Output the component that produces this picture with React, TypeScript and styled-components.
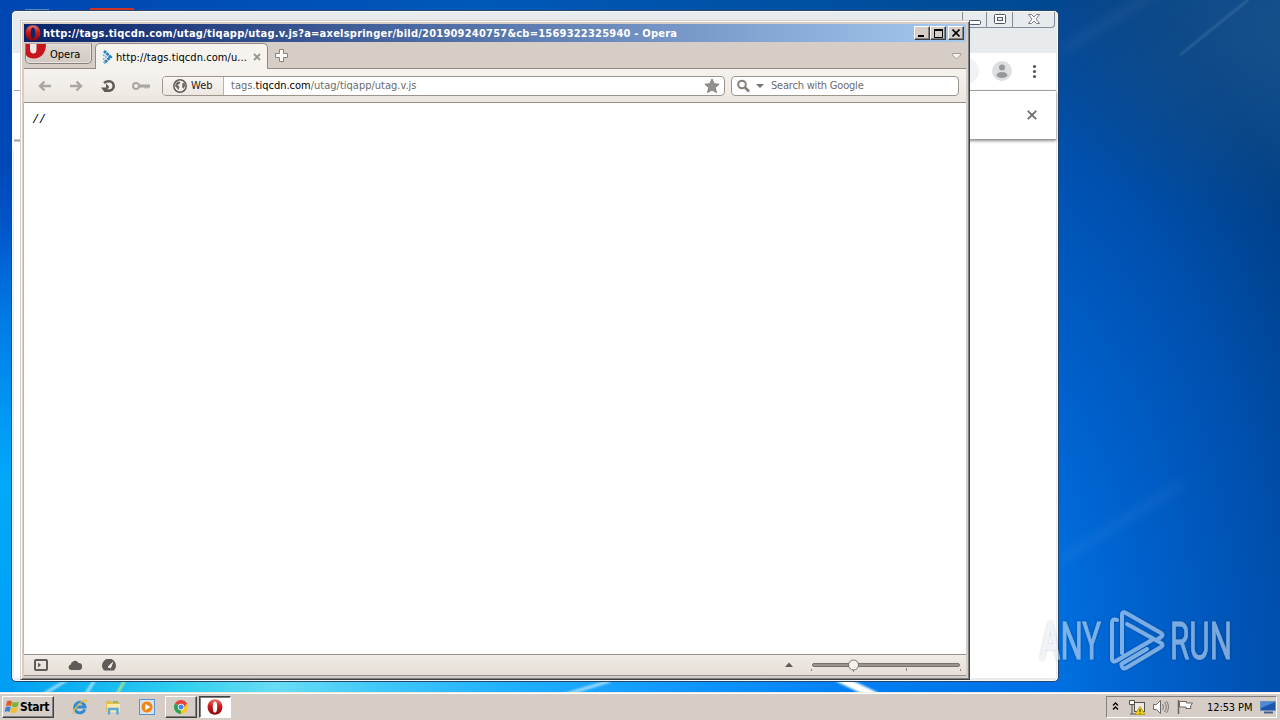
import styled, { createGlobalStyle, css } from "styled-components";

const GlobalStyle = createGlobalStyle`
  * {
    box-sizing: border-box;
  }
  body {
    margin: 0;
    overflow: hidden;
    font-family: "DejaVu Sans Condensed", "DejaVu Sans", sans-serif;
    font-size: 11px;
    color: #000;
  }
  svg {
    display: block;
    flex: none;
  }
`;

const Screen = styled.div`
  position: relative;
  display: flex;
  flex-direction: column;
  width: 1280px;
  height: 720px;
  overflow: hidden;
`;

const Desktop = styled.div`
  position: relative;
  flex: 1;
  background:
    linear-gradient(#0046b2, #0048b8 24%, #0054c8 32%, #0078e4 45%, #0098f4 60%, #00aaf8 70%, #009df4 100%) 0 0 / 14px
      100% no-repeat,
    linear-gradient(90deg, #0046b2, #0058b8 45%, #004f9f 80%, #004890) 0 0 / 1060px 14px no-repeat,
    linear-gradient(
        90deg,
        #009df4,
        #12b4f2 8%,
        #30d0f0 17%,
        #68dcf4 26%,
        #40c8fa 36%,
        #20b0fc 48%,
        #1098fc 64%,
        #0080f4 80%,
        #006ee6
      )
      0 100% / 1060px 14px no-repeat,
    radial-gradient(ellipse 300px 190px at 1290px 30px, #16508a, transparent),
    radial-gradient(
      ellipse 560px 900px at 900px 690px,
      #0080f0 0,
      #0070e0 28%,
      #005ec8 48%,
      #004fac 68%,
      #003f86 88%,
      #04458c 100%
    );
`;

const Wallpaper = styled.svg`
  position: absolute;
  inset: 0;
`;

/* ---------- browser window in the back ---------- */

const BackWindow = styled.div`
  position: absolute;
  left: 11px;
  top: 10px;
  width: 1048px;
  height: 672px;
  display: flex;
  flex-direction: column;
  padding: 1px 2px 3px 2px;
  border: 1px solid #26456c;
  border-radius: 5px;
  background: #e7ebee;
  box-shadow: inset 0 0 0 1px #f8fafa;
  isolation: isolate;
`;

const BackCaption = styled.div`
  display: flex;
  justify-content: flex-end;
  height: 41px;
`;

const AeroButtons = styled.div`
  display: flex;
  height: 16px;
  margin-right: 1px;
  border: 1px solid #838b98;
  border-top: 0;
  border-radius: 0 0 4px 4px;
`;

const AeroButton = styled.div<{ $width: number }>`
  display: flex;
  align-items: center;
  justify-content: center;
  width: ${(p) => p.$width}px;
  & + & {
    border-left: 1px solid #838b98;
  }
`;

const BackToolbar = styled.div`
  display: flex;
  align-items: center;
  justify-content: flex-end;
  height: 38px;
  padding: 0 18px 2px 0;
  background: #fff;
  border-bottom: 1px solid #a9abac;
`;

const OmniboxEnd = styled.div`
  width: 30px;
  height: 26px;
  margin-right: 13px;
  border-radius: 13px;
  background: #f1f2f3;
`;

const BackInfobar = styled.div`
  display: flex;
  align-items: center;
  justify-content: flex-end;
  height: 49px;
  padding-right: 19px;
  background: #fff;
  border-bottom: 1px solid #999;
  box-shadow: 0 1px 3px rgba(0, 0, 0, 0.45);
  z-index: 1;
`;

const BackPage = styled.div`
  flex: 1;
  background: #fff;
`;

/* ---------- Opera window ---------- */

const OperaWindow = styled.div`
  position: absolute;
  left: 20px;
  top: 20px;
  width: 950px;
  height: 660px;
  display: flex;
  flex-direction: column;
  padding: 2px;
  border: 1px solid;
  border-color: #d6d0c8 #404040 #404040 #d6d0c8;
  background: #d6cec6;
  box-shadow:
    inset 1px 1px 0 #fff,
    inset -1px -1px 0 #808080;
`;

const TitleBar = styled.div`
  display: flex;
  align-items: center;
  height: 18px;
  margin: 1px 1px 0 1px;
  padding: 0 2px 0 1px;
  background: linear-gradient(90deg, #0a246a, #a6caf0);
  color: #fff;
`;

const TitleText = styled.span`
  flex: 1;
  margin: 0 0 0 2px;
  font-weight: 700;
  font-size: 11px;
  letter-spacing: 0.228px;
  white-space: nowrap;
`;

const CaptionButton = styled.div<{ $gap?: boolean }>`
  display: flex;
  align-items: center;
  justify-content: center;
  width: 16px;
  height: 14px;
  margin-left: ${(p) => (p.$gap ? 2 : 0)}px;
  background: #d6cec6;
  border: 1px solid;
  border-color: #fff #404040 #404040 #fff;
  box-shadow: inset -1px -1px 0 #808080;
`;

const TabBar = styled.div`
  display: flex;
  height: 27px;
  margin: 0 1px;
  padding-left: 1px;
  background: #d6cec6;
  border-bottom: 1px solid #8f8a84;
`;

const OperaMenu = styled.div`
  display: flex;
  width: 67px;
  height: 21px;
  margin-top: 1px;
  border: 1px solid #86817c;
  border-top-color: #b4aea8;
  border-radius: 1px 1px 5px 5px;
  background: linear-gradient(#ded8d2, #d2cac2);
  box-shadow: inset 0 0 0 1px #e9e4df;
  line-height: 21px;
  overflow: hidden;
`;

const OperaMenuLabel = styled.span`
  margin-left: 3px;
`;

const Tab = styled.div`
  display: flex;
  align-items: center;
  width: 173px;
  height: 26px;
  margin: 1px 0 -1px 3px;
  padding: 1px 6px 0 6px;
  border: 1px solid #8f8a84;
  border-bottom: 0;
  border-radius: 5px 5px 0 0;
  background: #f6f3ef;
`;

const TabText = styled.span`
  flex: 1;
  margin-left: 3px;
  letter-spacing: 0.07px;
  white-space: nowrap;
`;

const NewTab = styled.div`
  display: flex;
  flex: 1;
  padding: 7px 0 0 7px;
`;

const TabListArrow = styled.div`
  padding: 11px 5px 0 0;
`;

const AddressBar = styled.div`
  display: flex;
  align-items: center;
  height: 34px;
  margin: 0 1px;
  padding: 0 7px 0 13px;
  background: linear-gradient(#f6f3ef, #ece7e0);
  border-bottom: 1px solid #969089;
`;

const NavIcons = styled.div`
  display: flex;
  align-items: center;
  width: 125px;
  gap: 15px;
`;

const Field = styled.div<{ $width: number; $gap?: number }>`
  display: flex;
  align-items: center;
  width: ${(p) => p.$width}px;
  height: 20px;
  margin-left: ${(p) => p.$gap ?? 0}px;
  border: 1px solid #9b958e;
  border-radius: 4px;
  background: #fff;
  color: #6c6c6c;
  overflow: hidden;
`;

const WebBadge = styled.div`
  display: flex;
  align-items: center;
  gap: 4px;
  width: 61px;
  height: 100%;
  padding-left: 10px;
  border-right: 1px solid #b9b3ac;
  background: linear-gradient(#f8f5f2, #ece7e1);
  color: #222;
`;

const Url = styled.span`
  flex: 1;
  padding-left: 7px;
  white-space: nowrap;
  b {
    font-weight: 400;
    color: #000;
  }
`;

const SearchHint = styled.span`
  margin-left: 7px;
  letter-spacing: -0.2px;
`;

const Page = styled.div`
  flex: 1;
  margin-right: 1px;
  padding: 10px 8px;
  border-left: 1px solid #bdb7b0;
  background: #fff;
  font: 12px/14px "Liberation Mono", monospace;
  letter-spacing: -0.4px;
`;

const StatusBar = styled.div`
  display: flex;
  align-items: center;
  height: 22px;
  margin: 0 1px 1px 1px;
  padding: 0 5px 0 10px;
  border-top: 1px solid #969089;
  border-bottom: 1px solid #87938b;
  background: linear-gradient(#f1ece7, #e6ded6);
`;

const StatusIcons = styled.div`
  display: flex;
  align-items: center;
  flex: 1;
  gap: 20px;
`;

/* ---------- taskbar ---------- */

const Taskbar = styled.div`
  position: relative;
  display: flex;
  align-items: center;
  height: 28px;
  padding: 1px 3px 0 2px;
  background: #d6cec6;
  border-top: 1px solid #f1ebe5;
  box-shadow: inset 0 1px 0 #fff;
`;

const raised = css`
  border: 1px solid;
  border-color: #fff #404040 #404040 #fff;
  box-shadow: inset -1px -1px 0 #808080;
`;

const sunken = css`
  border: 1px solid;
  border-color: #404040 #fff #fff #404040;
  box-shadow: inset 1px 1px 0 #808080;
`;

const StartButton = styled.div`
  ${raised}
  display: flex;
  align-items: center;
  width: 52px;
  height: 22px;
  padding-left: 1px;
  font-weight: 700;
  font-size: 12px;
  letter-spacing: -0.3px;
`;

const QuickLaunch = styled.div`
  display: flex;
  align-items: center;
  gap: 18px;
  margin: 0 10px 0 17px;
`;

const TaskButton = styled.div<{ $active?: boolean }>`
  ${(p) => (p.$active ? sunken : raised)}
  display: flex;
  align-items: center;
  justify-content: center;
  width: 32px;
  height: 22px;
  margin-right: 2px;
  background: ${(p) => (p.$active ? "#fff" : "#d6cec6")};
`;

const Tray = styled.div`
  display: flex;
  align-items: center;
  width: 171px;
  height: 22px;
  margin-left: auto;
  padding-left: 5px;
  border: 1px solid;
  border-color: #808080 #fff #fff #808080;
`;

const Clock = styled.span`
  margin: 0 8px 0 13px;
  letter-spacing: -0.1px;
  white-space: nowrap;
`;

const Watermark = styled.svg`
  position: absolute;
  left: 1030px;
  top: 604px;
  overflow: visible;
`;

const OperaLogo = () => (
  <svg width="16" height="16" viewBox="0 0 16 16">
    <defs>
      <linearGradient id="operaRed" x1="0" y1="0" x2="0" y2="1">
        <stop offset="0" stopColor="#e8746c" />
        <stop offset=".45" stopColor="#cc1a1c" />
        <stop offset="1" stopColor="#8c0508" />
      </linearGradient>
    </defs>
    <path
      fillRule="evenodd"
      fill="url(#operaRed)"
      d="M8 .3C12.4.3 15.4 3.6 15.4 8S12.4 15.7 8 15.7.6 12.4.6 8 3.6.3 8 .3ZM8 2.4C6.3 2.4 5.8 5 5.8 8S6.3 13.6 8 13.6 10.2 11 10.2 8 9.7 2.4 8 2.4Z"
    />
  </svg>
);

const ChromeLogo = () => (
  <svg width="14" height="14" viewBox="0 0 14 14">
    <path fill="#e2443b" d="M7 7 .94 3.5A7 7 0 0 1 13.06 3.5Z" />
    <path fill="#fbc921" d="M7 7 13.06 3.5A7 7 0 0 1 7 14Z" />
    <path fill="#2da14d" d="M7 7V14A7 7 0 0 1 .94 3.5Z" />
    <path fill="#e2443b" d="M7 3.5h6.06L10 7Z" />
    <path fill="#fbc921" d="M10.2 6 7 14 6.5 9Z" />
    <circle cx="7" cy="7" r="3.2" fill="#fff" />
    <circle cx="7" cy="7" r="2.5" fill="#4285f4" />
  </svg>
);

const WindowsFlag = () => (
  <svg width="16" height="16" viewBox="0 0 16 16">
    <path fill="#e2592a" d="M3 2.5C5 1 6.6 1.5 8 2.4L6.9 7.3C5.4 6.4 3.8 6.3 1.9 7.4Z" />
    <path fill="#79b635" d="M8.7 2.7C10.4 3.6 12.3 3.8 14.8 2.5L13.7 7.5C11.6 8.6 9.4 8.5 7.6 7.6Z" />
    <path fill="#3c82d2" d="M1.7 8.2C3.6 7.2 5.2 7.3 6.7 8.1L5.6 13C4.1 12.1 2.4 12.1.5 13.2Z" />
    <path fill="#f5bd2b" d="M7.4 8.4C9.2 9.3 11.2 9.4 13.5 8.3L12.4 13.2C10.3 14.3 8 14.2 6.3 13.3Z" />
  </svg>
);

const IeLogo = () => (
  <svg width="16" height="16" viewBox="-1 0 16 16">
    <path d="M12.7 10.5A5.2 5.2 0 1 1 13 7.9H4" fill="none" stroke="#2d8ad8" strokeWidth="3" />
    <path d="M1.6 14.8C.2 13 5 6 9.5 3 13 .7 16 .2 14.6 3.4" fill="none" stroke="#efbd2c" strokeWidth="1.3" />
  </svg>
);

const FolderIcon = () => (
  <svg width="16" height="16" viewBox="0 0 16 16">
    <path fill="#e4bd52" d="M1 2h5l1 1.5h8V13H1Z" />
    <path fill="#f8e9a6" d="M2 5h13v8H2Z" />
    <path fill="#90b958" d="M8 2h5v2H8Z" />
    <path d="M4 15.5V10h8.5v5.5" fill="none" stroke="#5aa9dc" strokeWidth="2.5" />
  </svg>
);

const MediaIcon = () => (
  <svg width="16" height="16" viewBox="0 0 16 16">
    <rect x=".5" y=".5" width="15" height="15" fill="#cfe2f4" stroke="#5b93cc" />
    <circle cx="8" cy="8" r="6" fill="#ef861d" stroke="#fff" strokeWidth=".6" />
    <path fill="#fff" d="M6.3 4.7 11.3 8l-5 3.3Z" />
  </svg>
);

const Arrow = ({ flip }: { flip?: boolean }) => (
  <svg width="16" height="16" viewBox="0 0 16 16" transform={flip ? "scale(-1 1)" : undefined}>
    <path d="M14 8H3M7.5 3.5 3 8l4.5 4.5" fill="none" stroke="#aaa6a2" strokeWidth="2.4" />
  </svg>
);

const BackWindowView = () => (
  <BackWindow>
    <BackCaption>
      <AeroButtons>
        <AeroButton $width={23}>
          <svg width="14" height="12">
            <rect x="1.5" y="6.5" width="11" height="4" rx="1" fill="#fff" stroke="#50566a" />
          </svg>
        </AeroButton>
        <AeroButton $width={26}>
          <svg width="12" height="11">
            <rect x=".5" y=".5" width="11" height="9" rx="1" fill="#fff" stroke="#50566a" />
            <rect x="3.5" y="3.5" width="5" height="3" fill="#e7ebee" stroke="#50566a" />
          </svg>
        </AeroButton>
        <AeroButton $width={42}>
          <svg width="12" height="11" viewBox="0 0 12 11">
            <path
              d="M.5.5h3L6 3 8.5.5h3L8 5l3.5 4.5h-3L6 7 3.5 9.5h-3L4 5Z"
              fill="#fff"
              stroke="#6b7080"
              strokeWidth=".9"
            />
          </svg>
        </AeroButton>
      </AeroButtons>
    </BackCaption>
    <BackToolbar>
      <OmniboxEnd />
      <svg width="20" height="20">
        <circle cx="10" cy="10" r="10" fill="#dedfe0" />
        <circle cx="10" cy="6.5" r="3" fill="#969899" />
        <ellipse cx="10" cy="14" rx="5.5" ry="3" fill="#969899" />
      </svg>
      <svg width="26" height="20">
        {[5, 10, 15].map((y) => (
          <circle key={y} cx="22.5" cy={y + 0.5} r="1.6" fill="#55585c" />
        ))}
      </svg>
    </BackToolbar>
    <BackInfobar>
      <svg width="10" height="10">
        <path d="M.8.8 9.2 9.2M9.2.8.8 9.2" stroke="#6a6d70" strokeWidth="1.8" />
      </svg>
    </BackInfobar>
    <BackPage />
  </BackWindow>
);

const OperaWindowView = () => (
  <OperaWindow>
    <TitleBar>
      <OperaLogo />
      <TitleText>http://tags.tiqcdn.com/utag/tiqapp/utag.v.js?a=axelspringer/bild/201909240757&amp;cb=1569322325940 - Opera</TitleText>
      <CaptionButton>
        <svg width="8" height="8">
          <path d="M0 6h6v2H0Z" />
        </svg>
      </CaptionButton>
      <CaptionButton>
        <svg width="9" height="9">
          <path d="M.5 1h8v7.5h-8Z" fill="none" stroke="#000" />
          <path d="M0 0h9v2H0Z" />
        </svg>
      </CaptionButton>
      <CaptionButton $gap>
        <svg width="8" height="8">
          <path d="M.5.5l7 7M7.5.5l-7 7" stroke="#000" strokeWidth="1.6" />
        </svg>
      </CaptionButton>
    </TitleBar>
    <TabBar>
      <OperaMenu>
        <svg width="21" height="17" viewBox="0 0 21 17">
          <path fill="#c5161d" d="M0 0H20C20 8 16 14.5 8 14.5 4 14.5 1 13 0 11Z" />
          <path fill="#f0e8e4" d="M4 0h6.5V5C10.500 8 9.500 9.500 7.500 9.500S4 8 4 5Z" />
        </svg>
        <OperaMenuLabel>Opera</OperaMenuLabel>
      </OperaMenu>
      <Tab>
        <svg width="11" height="14" viewBox="0 0 11 14">
          <path d="M2 1 8.5 7 2 13" fill="none" stroke="#2384c6" strokeWidth="2.8" strokeDasharray="2.8 .6" />
          <path d="M1 4.5 4 7 1 9.5" fill="none" stroke="#63b2e0" strokeWidth="1.6" strokeDasharray="2 1" />
        </svg>
        <TabText>http://tags.tiqcdn.com/u...</TabText>
        <svg width="8" height="8">
          <path d="M1 1l6 6M7 1 1 7" stroke="#98938f" strokeWidth="1.8" />
        </svg>
      </Tab>
      <NewTab>
        <svg width="13" height="13">
          <path d="M4.5.5h4v4h4v4h-4v4h-4v-4h-4v-4h4Z" fill="#fbfaf8" stroke="#89847e" />
        </svg>
      </NewTab>
      <TabListArrow>
        <svg width="9" height="7">
          <path d="M.5.5h8V2L4.5 6 .5 2Z" fill="#f5f2ee" stroke="#a39d97" />
        </svg>
      </TabListArrow>
    </TabBar>
    <AddressBar>
      <NavIcons>
        <Arrow />
        <Arrow flip />
        <svg width="18" height="16" viewBox="-2 0 18 16">
          <path d="M3 5Q5 3.200 8 3.200A4.600 4.600 0 0 1 8 12.600H3.500" fill="none" stroke="#5f5b58" strokeWidth="2.600" />
          <path d="M0 9.500H5V5.500L8 8.500V9.500L3.500 14Z" fill="#5f5b58" />
        </svg>
        <svg width="18" height="10" viewBox="0 0 18 10">
          <circle cx="4" cy="5" r="3" fill="none" stroke="#aaa6a2" strokeWidth="2" />
          <path d="M7 3.500h11v3h-1.500v1H15v-1h-1v1h-1.500v-1H7Z" fill="#aaa6a2" />
        </svg>
      </NavIcons>
      <Field $width={563}>
        <WebBadge>
          <svg width="14" height="14" viewBox="0 0 14 14">
            <circle cx="7" cy="7" r="6.2" fill="#f3efeb" stroke="#5f5b58" strokeWidth="1.5" />
            <path fill="#6f6b68" d="M3 4 5 2.500l2.500.5-1 2-2 .8L6.500 8 5.500 11 3.500 8.500 2 7ZM9.500 4l2-.2.700 3-1.700 3L9 8Z" />
          </svg>
          Web
        </WebBadge>
        <Url>
          tags.<b>tiqcdn.com</b>/utag/tiqapp/utag.v.js
        </Url>
        <svg width="24" height="16" viewBox="0 0 24 16">
          <path
            d="m12 1 2.1 4.7 5 .5-3.8 3.4 1.1 5L12 12l-4.4 2.6 1.1-5L4.9 6.2l5-.5Z"
            fill="#94908d"
            stroke="#858280"
          />
        </svg>
      </Field>
      <Field $width={228} $gap={6}>
        <svg width="32" height="14" viewBox="0 0 32 14">
          <circle cx="10" cy="5.5" r="3.8" fill="none" stroke="#85817e" strokeWidth="2" />
          <path d="m13 8.5 4 4" stroke="#85817e" strokeWidth="2.6" />
          <path d="M24 5h8l-4 4Z" fill="#77736f" />
        </svg>
        <SearchHint>Search with Google</SearchHint>
      </Field>
    </AddressBar>
    <Page>//</Page>
    <StatusBar>
      <StatusIcons>
        <svg width="14" height="12">
          <rect x="1" y="1" width="12" height="10" rx="1" fill="none" stroke="#5f5b58" strokeWidth="2" />
          <path d="M4 3.5 7 6 4 8.5Z" fill="#5f5b58" />
        </svg>
        <svg width="14" height="10">
          <path d="M3 10a2.8 2.8 0 0 1-.3-5.5A4.2 4.2 0 0 1 10.5 3 3.5 3.5 0 0 1 11 10Z" fill="#5f5b58" />
        </svg>
        <svg width="14" height="12">
          <path d="M2 11.5A7 7 0 1 1 12 11.5Z" fill="#5f5b58" />
          <path d="M6 8 10.5 3.5 8.5 9Z" fill="#f0ebe6" stroke="#f0ebe6" />
        </svg>
      </StatusIcons>
      <svg width="180" height="20">
        <path d="M4 12h8l-4-4.5Z" fill="#5f5b58" />
        <rect x="31.5" y="8.5" width="147" height="3" rx="1.5" fill="#9a948e" stroke="#77726d" />
        <path d="M30.5 14v2M72.5 14v3M125.5 13v3M179.5 14v2" stroke="#8b857f" />
        <circle cx="72.5" cy="10" r="5" fill="#f6f3ef" stroke="#77726d" />
      </svg>
    </StatusBar>
  </OperaWindow>
);

const App = () => {
  return (
    <Screen>
      <GlobalStyle />
      <Desktop>
        <Wallpaper width="1280" height="692">
          <defs>
            <filter id="soft">
              <feGaussianBlur stdDeviation="1" />
            </filter>
            <filter id="softer" x="-50%" y="-50%" width="200%" height="200%">
              <feGaussianBlur stdDeviation="5" />
            </filter>
          </defs>
          <g filter="url(#softer)" stroke="#fff" fill="none" strokeOpacity=".05" strokeWidth="9">
            <path d="M1062 50 1160 -10" />
            <path d="M1060 560 1180 485" />
          </g>
          <g filter="url(#soft)" stroke="#fff" fill="none">
            <path d="M1180 55 1248 0" strokeOpacity=".22" strokeWidth="1.5" />
            <path d="M44 694 70 678M86 694 96 678" strokeOpacity=".6" strokeWidth="3" />
            <path d="M117 694 126 678" stroke="#d8f070" strokeWidth="2" />
            <path d="M560 696 610 681" strokeOpacity=".6" strokeWidth="3" />
            <path d="M838 678 876 696" strokeWidth="8" />
          </g>
          <path d="M90 8h44v3H90Z" fill="#d03424" />
          <path d="M25 9h24v2H25Z" fill="#5388c0" />
        </Wallpaper>
        <BackWindowView />
        <Wallpaper width="24" height="160">
          <path d="M12 53h9v96h-9Z" fill="#fff" />
          <path d="M14 90.5h6" stroke="#a9abac" />
          <path d="M14 140.5h6" stroke="#9a9c9e" strokeWidth="2" />
        </Wallpaper>
        <OperaWindowView />
      </Desktop>
      <Taskbar>
        <StartButton>
          <WindowsFlag />
          Start
        </StartButton>
        <QuickLaunch>
          <IeLogo />
          <FolderIcon />
          <MediaIcon />
        </QuickLaunch>
        <TaskButton>
          <ChromeLogo />
        </TaskButton>
        <TaskButton $active>
          <OperaLogo />
        </TaskButton>
        <Tray>
          <svg width="82" height="18" viewBox="0 0 82 18">
            <path d="M1 7.5 3.5 5 6 7.5M1 11.5 3.5 9 6 11.5" fill="none" stroke="#000" strokeWidth="1.3" />
            <rect x="22.5" y="4.5" width="10" height="9" fill="#ece9e4" stroke="#55524e" />
            <path d="M17.5 2.5h5v4h-5ZM20 7v9M18 16h6" fill="#fff" stroke="#55524e" />
            <path d="m28 8.5 5 8h-10Z" fill="#f5d30c" stroke="#a48b08" strokeWidth=".7" />
            <path d="M28 11v3M28 14.8v1" stroke="#222" />
            <path d="M41.5 6.5h3l4-4v13l-4-4h-3Z" fill="#fff" stroke="#6a6764" />
            <path d="M50.5 6q2 3 0 6M52.5 4q3.5 5 0 10M54.5 3q4 6 0 12" fill="none" stroke="#7b7875" />
            <path d="M66.5 2v14" stroke="#6a6764" strokeWidth="1.5" />
            <path d="M67.5 3.5h7v1.5h6l-2 3 .5 2.5h-5v-1.5h-6.5Z" fill="#fff" stroke="#6a6764" />
          </svg>
          <Clock>12:53 PM</Clock>
          <svg width="16" height="14">
            <path d="M.5 1.5h15v9H.5Z" fill="#1c55ae" stroke="#698fc5" />
            <path d="M1 2h14L1 8Z" fill="#4b8bd8" />
            <path d="M4 12.5h9" stroke="#4a6288" strokeWidth="2" />
          </svg>
        </Tray>
      </Taskbar>
      <Watermark width="220" height="74">
        <defs>
          <filter id="shade">
            <feDropShadow dx="0" dy="0" stdDeviation="1.5" floodColor="#000" floodOpacity=".45" />
          </filter>
        </defs>
        <g filter="url(#shade)" opacity=".55">
          <g fill="#e2ecf6" stroke="#e2ecf6" strokeWidth=".8" fontFamily="Roboto" fontWeight="400" fontSize="52">
            <text x="10" y="55" textLength="61" lengthAdjust="spacingAndGlyphs">
              ANY
            </text>
            <text x="140" y="55" textLength="62" lengthAdjust="spacingAndGlyphs">
              RUN
            </text>
          </g>
          <path
            d="M87 16Q82 14 82 19V54Q82 59 86 57L122 36M92 49V11Q92 7 96 9L131 29Q134 31 131 33L128 35M97 20 131 39Q134 41 131 43L96 64Q92 66 91.5 60L117 45"
            fill="none"
            stroke="#e2ecf6"
            strokeWidth="4"
            strokeLinejoin="round"
            strokeLinecap="round"
          />
        </g>
      </Watermark>
    </Screen>
  );
};

export default App;
